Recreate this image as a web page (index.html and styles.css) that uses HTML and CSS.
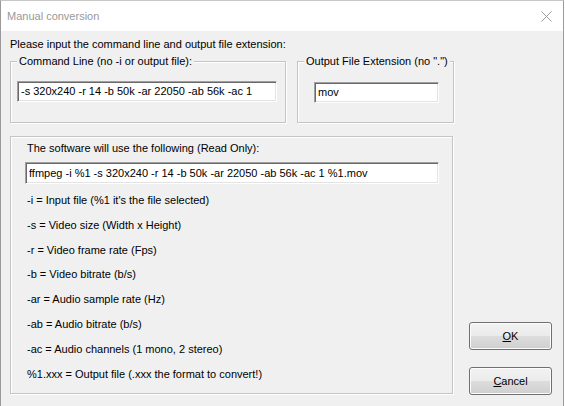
FILE: index.html
```html
<!DOCTYPE html>
<html>
<head>
<meta charset="utf-8">
<link rel="stylesheet" href="styles.css">
</head>
<body>
<div class="window">
  <div class="titlebar">
    <span class="title">Manual conversion</span>
    <svg class="close" width="11" height="11" viewBox="0 0 11 11"><path d="M0.5 0.5 L10.5 10.5 M10.5 0.5 L0.5 10.5" stroke="#9a9a9a" stroke-width="1" fill="none"/></svg>
  </div>
  <div class="client">
    <p class="intro">Please input the command line and output file extension:</p>
    <div class="top-row">
      <fieldset class="group group-cmd">
        <legend>Command Line (no -i or output file):</legend>
        <div class="edit edit-cmd">-s 320x240 -r 14 -b 50k -ar 22050 -ab 56k -ac 1</div>
      </fieldset>
      <fieldset class="group group-ext">
        <legend>Output File Extension (no ".")</legend>
        <div class="edit edit-ext">mov</div>
      </fieldset>
    </div>
    <div class="bottom-row">
      <div class="group group-info">
        <p class="info-title">The software will use the following (Read Only):</p>
        <div class="edit edit-ro">ffmpeg -i %1 -s 320x240 -r 14 -b 50k -ar 22050 -ab 56k -ac 1 %1.mov</div>
        <div class="lines">
          <p>-i = Input file (%1 it's the file selected)</p>
          <p>-s = Video size (Width x Height)</p>
          <p>-r = Video frame rate (Fps)</p>
          <p>-b = Video bitrate (b/s)</p>
          <p>-ar = Audio sample rate (Hz)</p>
          <p>-ab = Audio bitrate (b/s)</p>
          <p>-ac = Audio channels (1 mono, 2 stereo)</p>
          <p>%1.xxx = Output file (.xxx the format to convert!)</p>
        </div>
      </div>
      <div class="buttons">
        <button class="btn"><u>O</u>K</button>
        <button class="btn"><u>C</u>ancel</button>
      </div>
    </div>
  </div>
</div>
</body>
</html>
```

FILE: styles.css
```css
* { box-sizing: border-box; }
html, body { margin: 0; padding: 0; background: #fff; }
body {
  font-family: "Liberation Sans", Arial, sans-serif;
  font-size: 11px;
  color: #000;
}
.window {
  width: 564px;
  height: 406px;
  border-top: 1px solid #c8c8c8;
  border-left: 1px solid #9a9a9a;
  border-right: 1px solid #9a9a9a;
  display: flex;
  flex-direction: column;
  overflow: hidden;
}
.titlebar {
  height: 30px;
  flex: none;
  background: #fff;
  display: flex;
  align-items: center;
  justify-content: space-between;
  padding: 0 11px 0 6px;
}
.title {
  font-family: "Liberation Sans", Arial, sans-serif;
  font-size: 11px;
  color: #999;
}
.close { display: block; }
.client {
  flex: 1;
  background: #f0f0f0;
  padding: 7px 0 0 9px;
}
.intro { margin: 0; line-height: 13px; }
.top-row {
  display: flex;
  gap: 11px;
  margin-top: 4px;
}
.group {
  margin: 0;
  padding: 0;
  min-width: 0;
  border: 1px solid #c4c4c4;
  box-shadow: inset 1px 1px 0 #fff, 1px 1px 0 #fff;
}
.group legend {
  margin-left: 6px;
  padding: 0 2px;
  line-height: 13px;
  background: #f0f0f0;
}
.group-cmd { width: 276px; height: 68px; }
.group-ext { width: 157px; height: 68px; }
.edit {
  background: #fff;
  border-top: 1px solid #a0a0a0;
  border-left: 1px solid #a0a0a0;
  border-right: 1px solid #fff;
  border-bottom: 1px solid #fff;
  box-shadow: inset 1px 1px 0 #696969, inset -1px -1px 0 #e3e3e3;
  padding-left: 3px;
  line-height: 19px;
  white-space: nowrap;
  overflow: hidden;
}
.edit-cmd { margin: 13px 0 0 6px; width: 260px; height: 21px; }
.edit-ext { margin: 14px 0 0 16px; width: 125px; height: 21px; }
.bottom-row {
  display: flex;
  align-items: flex-end;
  gap: 16px;
  margin-top: 13px;
}
.group-info {
  width: 443px;
  height: 258px;
  padding: 5px 0 0 16px;
}
.info-title { margin: 0; line-height: 13px; }
.edit-ro {
  margin: 7px 0 0 -2px;
  width: 414px;
  height: 22px;
  line-height: 20px;
}
.lines { margin-top: 4px; }
.lines p { margin: 0; line-height: 24.8px; }
.buttons {
  display: flex;
  flex-direction: column;
  gap: 17px;
  margin-bottom: -1px;
}
.btn {
  width: 83px;
  height: 28px;
  font-family: "Liberation Sans", Arial, sans-serif;
  font-size: 11px;
  color: #000;
  border: 1px solid #707070;
  border-radius: 3px;
  background: linear-gradient(#f2f2f2 0%, #ebebeb 50%, #dddddd 51%, #cfcfcf 100%);
  box-shadow: inset 0 0 0 1px #fcfcfc;
  padding: 0;
}
```
